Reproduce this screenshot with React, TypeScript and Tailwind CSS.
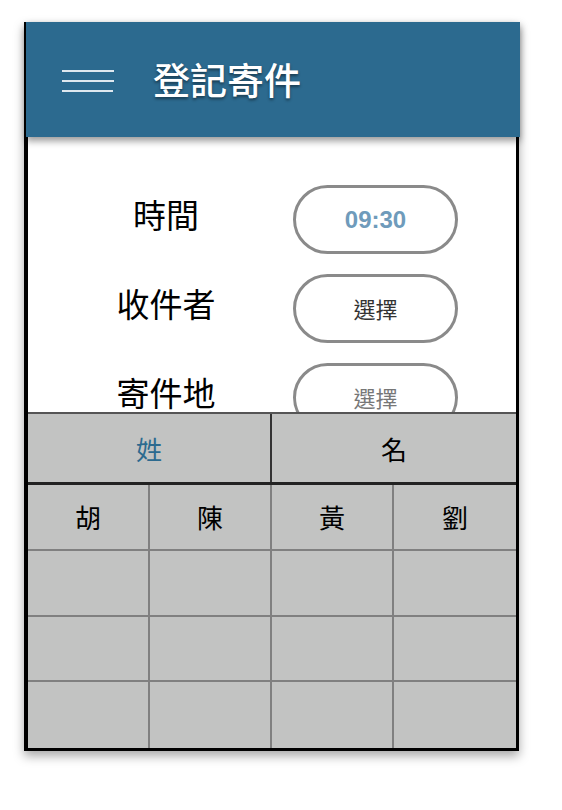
const cjk = "font-['Noto_Sans_CJK_TC','Noto_Sans_CJK_SC',sans-serif]";

const surnames = ['胡', '陳', '黃', '劉'];

function PillButton({ children, className }: { children: React.ReactNode; className?: string }) {
  return (
    <div
      className={`flex h-[69px] w-[165px] items-center justify-center rounded-full border-[3px] border-[#8a8a8a] bg-white ${className ?? ''}`}
    >
      {children}
    </div>
  );
}

function FormRow({ label, children }: { label: string; children: React.ReactNode }) {
  return (
    <div className="flex items-center">
      <div className="mb-[10px] w-[220px] text-center text-[33px] leading-none text-black">{label}</div>
      <div className="ml-[17px]">{children}</div>
    </div>
  );
}

export default function App() {
  return (
    <div className={`min-h-[810px] w-[562px] bg-white pt-[22px] pl-[24px] ${cjk}`}>
      <div className="flex h-[729px] w-[495px] flex-col border-[3px] border-l-4 border-black bg-white shadow-[0_5px_10px_rgba(0,0,0,0.35)]">
        {/* header */}
        <div className="relative z-10 -mt-[3px] -mr-[4px] -ml-[2px] flex h-[115px] shrink-0 items-center bg-[#2c6a8f] shadow-[0_4px_7px_rgba(0,0,0,0.4)]">
          <div className="ml-[36px] flex w-[52px] flex-col gap-[8px] pt-[3px]">
            <span className="h-[2px] w-[52px] bg-[#dfe8ef]" />
            <span className="h-[2px] w-[52px] bg-[#dfe8ef]" />
            <span className="h-[2px] w-[51px] bg-[#dfe8ef]" />
          </div>
          <h1 className="ml-[39px] text-[37px] leading-none font-medium text-white [text-shadow:0_2px_3px_rgba(0,0,0,0.45)]">
            登記寄件
          </h1>
        </div>

        {/* form */}
        <div className="h-[275px] shrink-0 overflow-hidden pt-[48px] pl-[28px]">
          <div className="flex flex-col gap-[20px]">
            <FormRow label="時間">
              <PillButton>
                <span className="font-['Liberation_Sans',sans-serif] text-[24px] font-bold text-[#6f9bbb]">09:30</span>
              </PillButton>
            </FormRow>
            <FormRow label="收件者">
              <PillButton>
                <span className="text-[22px] text-[#333]">選擇</span>
              </PillButton>
            </FormRow>
            <FormRow label="寄件地">
              <PillButton>
                <span className="text-[22px] text-[#777]">選擇</span>
              </PillButton>
            </FormRow>
          </div>
        </div>

        {/* surname picker */}
        <div className="flex flex-1 flex-col bg-[#c2c3c2]">
          <div className="grid h-[73px] shrink-0 grid-cols-2 border-t-2 border-b-[3px] border-t-[#555] border-b-[#222]">
            <div className="flex items-center justify-center border-r-2 border-[#333] text-[26px] text-[#2c6a8f]">姓</div>
            <div className="flex items-center justify-center text-[26px] text-black">名</div>
          </div>
          <div className="grid flex-1 grid-cols-4 grid-rows-4">
            {Array.from({ length: 16 }).map((_, i) => (
              <div
                key={i}
                className={`flex items-center justify-center text-[26px] text-black ${i % 4 !== 3 ? 'border-r-2' : ''} ${i < 12 ? 'border-b-2' : ''} border-[#808080]`}
              >
                {i < 4 ? surnames[i] : ''}
              </div>
            ))}
          </div>
        </div>
      </div>
    </div>
  );
}
